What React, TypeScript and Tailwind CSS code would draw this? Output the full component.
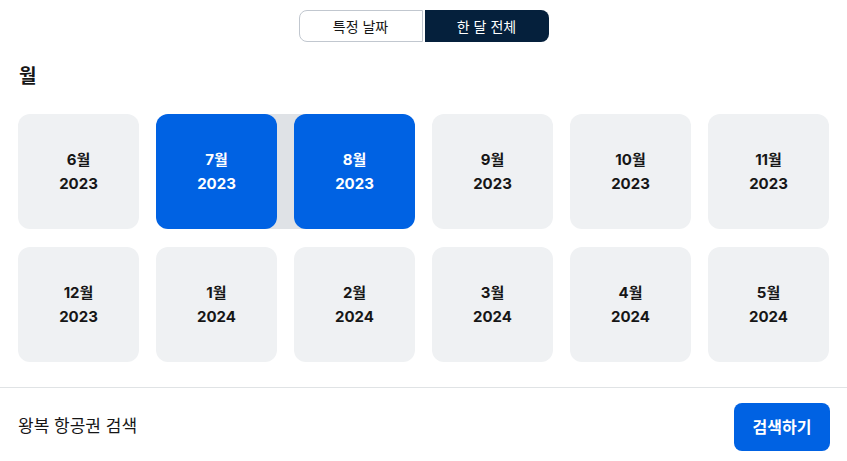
import React from 'react';

const months = [
  { m: '6월', y: '2023' },
  { m: '7월', y: '2023', sel: 'start' },
  { m: '8월', y: '2023', sel: 'end' },
  { m: '9월', y: '2023' },
  { m: '10월', y: '2023' },
  { m: '11월', y: '2023' },
  { m: '12월', y: '2023' },
  { m: '1월', y: '2024' },
  { m: '2월', y: '2024' },
  { m: '3월', y: '2024' },
  { m: '4월', y: '2024' },
  { m: '5월', y: '2024' },
];

export default function App() {
  return (
    <div
      className="w-[847px] h-[461px] bg-white text-[#161616] flex flex-col overflow-hidden"
      style={{ fontFamily: 'Inter, "Noto Sans CJK KR", sans-serif' }}
    >
      {/* mode toggle */}
      <div className="flex justify-center gap-[2px] pt-[10px]">
        <button className="w-[124px] h-[32px] border border-[#c1c7cf] rounded-l-lg text-[14px] text-[#161616] bg-white">
          특정 날짜
        </button>
        <button className="w-[124px] h-[32px] rounded-r-lg text-[14px] text-white bg-[#05203c]">
          한 달 전체
        </button>
      </div>

      <h2 className="px-[19px] mt-[22px] text-[19px] font-bold leading-[26px]">월</h2>

      {/* month grid */}
      <div className="grid grid-cols-6 gap-x-[17px] gap-y-[18px] px-[18px] mt-[24px]">
        {months.map((item) => (
          <div key={item.m + item.y} className="relative h-[115px]">
            {item.sel === 'start' && (
              <div className="absolute inset-y-0 left-1/2 right-[-77.5px] bg-[#dfe2e6]" />
            )}
            <button
              className={
                'relative z-10 w-full h-full rounded-xl flex flex-col items-center justify-center gap-[5px] text-[15px] font-bold leading-[19px] ' +
                (item.sel ? 'bg-[#0062e3] text-white' : 'bg-[#eff1f3] text-[#161616]')
              }
            >
              <span>{item.m}</span>
              <span>{item.y}</span>
            </button>
          </div>
        ))}
      </div>

      {/* footer */}
      <div className="mt-[25px] border-t border-[#e0e3e5] flex items-center justify-between pl-[18px] pr-[17px] pt-[15px]">
        <span className="text-[17px]">왕복 항공권 검색</span>
        <button className="w-[96px] h-[48px] rounded-lg bg-[#0062e3] text-white text-[16px] font-bold">
          검색하기
        </button>
      </div>
    </div>
  );
}
